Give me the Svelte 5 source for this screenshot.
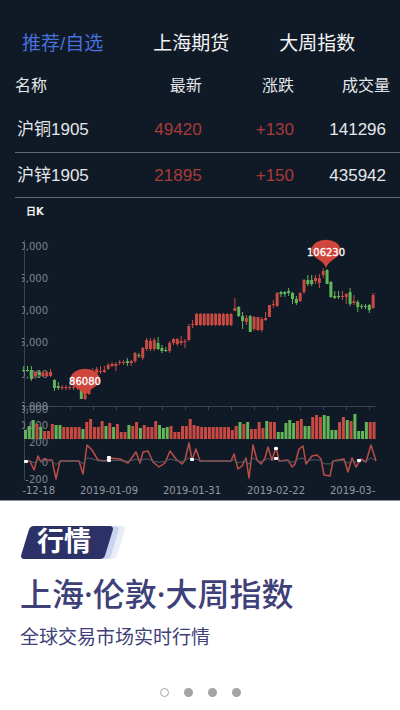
<script lang="ts">
	interface Quote {
		name: string;
		price: string;
		change: string;
		volume: string;
	}

	const tabs = ['推荐/自选', '上海期货', '大周指数'];
	let activeTab = $state(0);
	let activeSlide = $state(0);

	const quotes: Quote[] = [
		{ name: '沪铜1905', price: '49420', change: '+130', volume: '141296' },
		{ name: '沪锌1905', price: '21895', change: '+150', volume: '435942' }
	];

	// direction, body top, body bottom, high, low
	const candleRows = `
g 370 371 366 372|g 370 371 366 372|g 370 379 366 381|r 372 376 371 379|g 372 375 370 378
r 373 376 371 377|r 372 376 371 377|r 372 376 369 377|g 380 388 379 391|g 386 388 382 390
r 387 388 385 390|r 387 388 385 390|r 387 388 385 390|r 387 388 385 390|r 387 388 385 390
g 390 399 389 399|r 395 399 392 400|r 383 394 382 395|r 371 383 368 384|r 369 373 367 376
r 371 372 366 374|r 370 372 366 373|r 365 369 363 370|r 364 366 362 367|r 364 366 362 371
r 362 363 360 365|r 362 363 360 365|g 361 363 358 366|r 361 363 360 366|r 353 361 352 363
g 355 356 353 358|r 348 358 347 360|r 340 349 338 351|r 341 349 338 351|r 340 349 338 351
g 343 349 337 350|g 348 351 345 353|g 350 351 347 352|r 343 351 341 353|r 339 343 338 345
r 339 344 338 346|r 341 343 336 345|r 341 342 339 348|r 326 340 324 341|r 324 325 320 328
r 314 325 313 326|r 314 325 313 326|r 314 325 313 326|r 314 325 313 326|r 314 325 313 326
r 314 325 313 326|r 314 325 313 326|r 314 325 313 326|r 314 325 313 326|r 314 325 313 326
r 308 311 298 311|g 307 316 306 317|g 316 321 312 329|r 318 322 315 325|g 316 332 315 332
r 317 329 316 331|r 317 330 317 331|r 319 330 317 332|r 318 320 312 321|r 305 317 305 317
r 304 305 300 308|r 293 306 292 307|g 292 294 291 297|g 292 294 291 297|g 291 293 288 296
g 293 299 292 304|g 299 303 296 305|r 293 301 292 302|r 280 292 279 294|g 280 284 275 286
g 280 284 275 286|r 278 281 275 284|r 278 283 274 288|r 271 275 268 278|g 270 284 269 284
g 282 297 281 298|g 296 298 291 299|g 296 297 291 299|r 296 297 291 300|r 294 297 293 304
g 292 304 288 306|r 301 303 295 305|g 302 307 300 312|g 306 307 304 309|g 306 307 304 309
g 305 310 304 313|r 295 308 293 309|r 293 294 291 297`;

	const candles = candleRows
		.trim()
		.split(/[|\n]/)
		.map((row, i) => {
			const [dir, top, bottom, high, low] = row.split(' ');
			return { dir, x: 23.7 + i * 3.84, top: +top, bottom: +bottom, high: +high, low: +low };
		});

	const volumes = `g9 g13 g19 r15 g12 r8 r8 r15 g14 g14 r12 r12 r12 r12 r12 g10 r17 r20 r12 r12 r18
g13 r16 g12 r15 r7 r7 g14 r13 r17 g11 r14 r12 r12 r18 g14 g11 g12 r13 r7 r7 r13 r13 r20 r14 r13
r12 r12 r12 r12 r12 r12 r12 r12 r9 r13 g17 r15 g17 r10 r10 r17 r11 g18 r17 r17 g7 g7 g16 g19
g16 r18 r20 g13 g13 r22 r24 r22 g24 g23 g9 g9 r17 r22 g19 r18 g25 g8 g8 g17 r17 r17`
		.split(/\s+/)
		.map((bar, i) => ({ dir: bar[0], x: 24 + i * 3.83, height: +bar.slice(1) }));

	const oscillator = [
		[26, 461], [30, 461], [34, 470], [38, 456], [41, 462], [44, 459], [47, 460], [52, 460],
		[56, 479], [60, 461], [79, 461], [83, 474], [87, 445], [92, 450], [98, 460], [105, 461],
		[109, 458], [120, 459], [128, 463], [136, 452], [140, 463], [143, 452], [148, 451],
		[153, 462], [159, 467], [165, 463], [170, 451], [176, 459], [182, 464], [185, 460],
		[189, 443], [192, 460], [196, 449], [200, 461], [231, 461], [234, 454], [238, 469],
		[242, 466], [246, 458], [249, 478], [253, 445], [257, 460], [261, 464], [265, 458],
		[268, 447], [272, 460], [276, 447], [279, 461], [288, 460], [292, 467], [295, 464],
		[299, 449], [303, 446], [306, 464], [312, 456], [317, 455], [321, 459], [324, 475],
		[330, 476], [333, 461], [344, 459], [348, 472], [352, 458], [356, 467], [361, 459],
		[366, 462], [371, 445], [376, 461]
	];
	const fastLine = oscillator.map((p) => p.join(',')).join(' ');
	const slowLine = oscillator.map(([x, y]) => `${x},${461 + (y - 461) * 0.2}`).join(' ');

	const markers = [[26, 461], [109, 457], [109, 460], [192, 459], [276, 448], [276, 458], [359, 460]];
	const ticks = Array.from({ length: 16 }, (_, i) => 24 + i * 23);

	const scale = [
		{ label: '110,000', y: 246 },
		{ label: '105,000', y: 278 },
		{ label: '100,000', y: 310 },
		{ label: '95,000', y: 342 },
		{ label: '90,000', y: 374 },
		{ label: '85,000', y: 406 },
		{ label: '90,000', y: 409 },
		{ label: '60,000', y: 425 },
		{ label: '200', y: 442 },
		{ label: '0', y: 462 },
		{ label: '-200', y: 479 }
	];

	const dates = [
		{ label: '2018-12-18', x: 26 },
		{ label: '2019-01-09', x: 109 },
		{ label: '2019-01-31', x: 192 },
		{ label: '2019-02-22', x: 276 },
		{ label: '2019-03-18', x: 359 }
	];

	const pins = [
		{ label: '86080', x: 85, y: 397 },
		{ label: '106230', x: 326, y: 268 }
	];
</script>

<main>
	<section class="market">
		<nav class="tabs">
			{#each tabs as tab, i}
				<button class="tab" class:active={i === activeTab} onclick={() => (activeTab = i)}>{tab}</button>
			{/each}
		</nav>

		<table class="quotes">
			<thead>
				<tr>
					<th>名称</th>
					<th>最新</th>
					<th>涨跌</th>
					<th>成交量</th>
				</tr>
			</thead>
			<tbody>
				{#each quotes as quote}
					<tr>
						<td>{quote.name}</td>
						<td class="up">{quote.price}</td>
						<td class="up">{quote.change}</td>
						<td>{quote.volume}</td>
					</tr>
				{/each}
			</tbody>
		</table>

		<svg class="chart" viewBox="0 198 400 302" role="img" aria-label="日K">
			<defs>
				<clipPath id="plot">
					<rect x="22" y="230" width="354" height="270" />
				</clipPath>
			</defs>

			<text class="heading" x="26" y="215">日K</text>

			<path class="axis" d="M24.5 240V480M24 406.5H376" />
			{#each ticks as x}
				<path class="axis" d="M{x + 0.5} 407v3" />
			{/each}

			<g clip-path="url(#plot)">
				{#each scale as item}
					<text class="label" x="48" y={item.y + 4} text-anchor="end">{item.label}</text>
				{/each}
				{#each dates as date}
					<text class="label date" x={date.x} y="494" text-anchor="middle">{date.label}</text>
				{/each}

				{#each candles as c}
					<g class={c.dir}>
						<rect x={c.x - 0.5} y={c.high} width="1" height={c.low - c.high} />
						<rect x={c.x - 1.5} y={c.top} width="3" height={c.bottom - c.top} />
					</g>
				{/each}
				{#each volumes as bar}
					<rect class={bar.dir} x={bar.x} y={439 - bar.height} width="3" height={bar.height} />
				{/each}
			</g>

			<polyline class="fast" points={fastLine} />
			<polyline class="slow" points={slowLine} />
			{#each markers as [x, y]}
				<rect x={x - 2} y={y - 1} width="4" height="3" rx="1" fill="#fff" />
			{/each}

			{#each pins as pin}
				<path
					class="pin"
					d="M{pin.x} {pin.y}c-2-6-7-8-11-11a14.5 10.5 0 1 1 22 0c-4 3-9 5-11 11z"
				/>
				<text class="pin-label" x={pin.x} y={pin.y - 12} text-anchor="middle">{pin.label}</text>
			{/each}
		</svg>
	</section>

	<section class="intro">
		<span class="badge">行情</span>
		<h1>上海·伦敦·大周指数</h1>
		<p>全球交易市场实时行情</p>
		<div class="dots">
			{#each [0, 1, 2, 3] as i}
				<button
					class="dot"
					class:current={i === activeSlide}
					aria-label={`${i + 1}`}
					onclick={() => (activeSlide = i)}
				></button>
			{/each}
		</div>
	</section>
</main>

<style>
	:global(body) {
		margin: 0;
		background: #fff;
	}

	main {
		font-family: 'Liberation Sans', 'Noto Sans CJK SC', sans-serif;
	}

	button {
		padding: 0;
		border: 0;
		background: none;
		font: inherit;
		cursor: pointer;
	}

	.market {
		background: #101a26;
		border-bottom: 1px solid #8d919c;
		color: #e4e7eb;
	}

	.tabs {
		display: flex;
		gap: 50px;
		padding: 22px 0 0 22px;
	}

	.tab {
		height: 43px;
		font-size: 19px;
		line-height: 43px;
		white-space: nowrap;
		color: #f2f4f6;
	}

	.tab.active {
		color: #4770dc;
	}

	.quotes {
		width: calc(100% - 15px);
		margin-left: 15px;
		table-layout: fixed;
		border-collapse: collapse;
	}

	th,
	td {
		box-sizing: border-box;
		padding: 0 2px 0 0;
		text-align: right;
		font-weight: 400;
		white-space: nowrap;
	}

	th {
		width: 24%;
		height: 42px;
		font-size: 16px;
		line-height: 42px;
	}

	th:nth-child(2) {
		width: 25%;
	}

	th:first-child,
	td:first-child {
		text-align: left;
	}

	td {
		height: 45px;
		padding-top: 2px;
		border-bottom: 1px solid #626a75;
		font-size: 17px;
		line-height: 42px;
	}

	td:first-child {
		padding-left: 2px;
	}

	th:last-child {
		width: 27%;
		padding-right: 10px;
	}

	td:last-child {
		padding-right: 14px;
	}

	.up {
		color: #a83a3a;
	}

	.chart {
		display: block;
		width: 100%;
		font-family: 'DejaVu Sans', 'Noto Sans CJK SC', sans-serif;
		font-size: 10px;
	}

	.heading {
		font-weight: 700;
		fill: #eef0f2;
	}

	.axis {
		fill: none;
		stroke: #3b444e;
	}

	.label {
		fill: #7c838b;
	}

	.date {
		fill: #9298a0;
	}

	.r {
		fill: #c94a43;
	}

	.g {
		fill: #62b558;
	}

	.fast,
	.slow {
		fill: none;
		stroke-linejoin: round;
	}

	.fast {
		stroke: #bd4d47;
		stroke-width: 1.5;
	}

	.slow {
		stroke: #4f5b66;
	}

	.pin {
		fill: #d0453c;
	}

	.pin-label {
		fill: #fff;
		stroke: #fff;
		stroke-width: 0.3;
	}

	.intro {
		padding: 25px 20px 13px;
		color: #3e4078;
	}

	.badge {
		position: relative;
		z-index: 0;
		display: block;
		width: 94px;
		height: 33px;
		padding-left: 17px;
		box-sizing: border-box;
		font-size: 27px;
		font-weight: 700;
		line-height: 32px;
		color: #fff;
	}

	.badge::before {
		content: '';
		position: absolute;
		inset: 0 5px;
		z-index: -1;
		border-radius: 4px;
		background: #2c3168;
		box-shadow:
			6px 0 #c9d4ef,
			12px 0 #e9edf6;
		transform: skewX(-17deg);
	}

	h1 {
		margin: 11px 0 0;
		font-family: 'Noto Sans', 'Noto Sans CJK SC', sans-serif;
		font-size: 32px;
		font-weight: 500;
		line-height: 48px;
		white-space: nowrap;
	}

	p {
		margin: 6px 0 0;
		font-size: 19px;
		font-weight: 400;
		line-height: 28px;
	}

	.dots {
		display: flex;
		justify-content: center;
		gap: 15px;
		margin-top: 36px;
	}

	.dot {
		width: 9px;
		height: 9px;
		border-radius: 50%;
		background: #a5a5a5;
	}

	.dot.current {
		border: 1px solid #a5a5a5;
		background: #fff;
	}
</style>
